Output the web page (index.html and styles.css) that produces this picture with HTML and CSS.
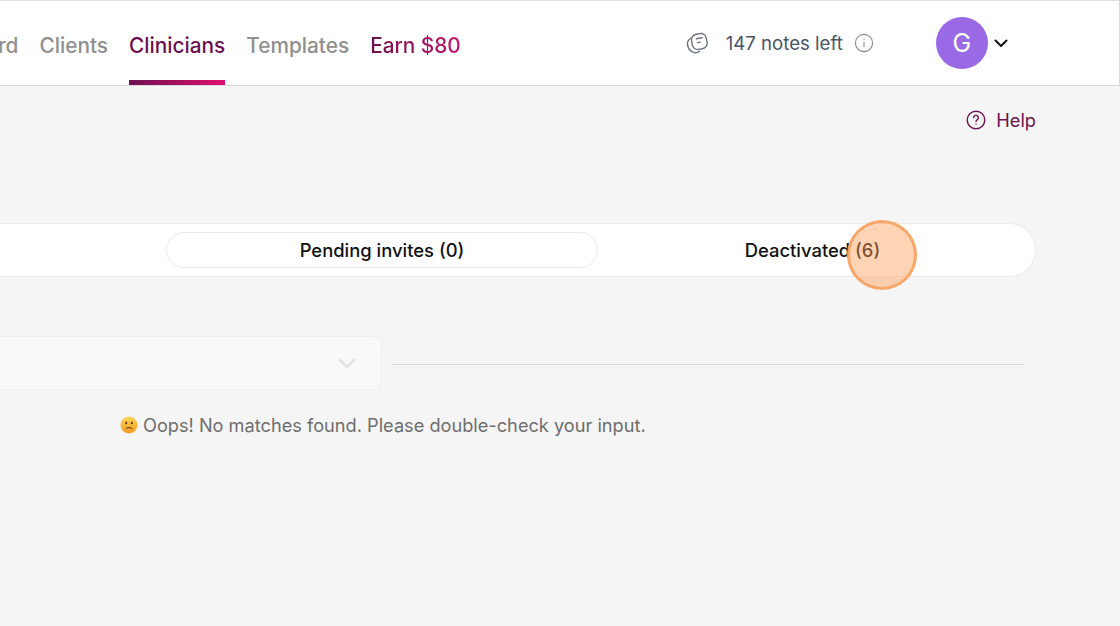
FILE: index.html
```html
<!DOCTYPE html>
<html lang="en">

<head>
  <meta charset="UTF-8">
  <meta name="viewport" content="width=device-width, initial-scale=1.0">
  <title>Clinicians</title>
  <link rel="stylesheet" href="styles.css">
</head>

<body>

  <!-- Top Bar -->
  <header class="topbar">
    <nav class="nav">
      <a class="nav-link">Dashboard</a>
      <a class="nav-link">Clients</a>
      <a class="nav-link active">Clinicians</a>
      <a class="nav-link">Templates</a>
      <a class="nav-link earn">Earn $80</a>
    </nav>

    <div class="notes">
      <svg class="notes-icon" width="24" height="24" viewBox="0 0 24 24" fill="none" stroke="#6b7280" stroke-width="1.4" stroke-linecap="round" stroke-linejoin="round">
        <rect x="6.8" y="2.8" width="15" height="15.4" rx="5.6" transform="rotate(-10 14.3 10.5)"/>
        <path d="M6.2 7C3.6 8.4 2 10.8 2.6 14c.6 3.4 2.8 6.4 6 7.4 2.2.7 4.4.2 5.8-1.2"/>
        <path d="M11.4 7.8l5.6-1M12.4 11.6l2.8-.5"/>
      </svg>
      <span class="notes-text">147 notes left</span>
      <svg width="20" height="20" viewBox="0 0 20 20" fill="none" stroke="#8a8a8a" stroke-width="1.1" stroke-linecap="round">
        <circle cx="10" cy="10" r="8.6"/>
        <path d="M10 9.2v4.6M10 6.2v.3"/>
      </svg>
    </div>

    <div class="account">
      <div class="avatar">G</div>
      <svg class="account-chevron" width="14" height="9" viewBox="0 0 14 9" fill="none" stroke="#111" stroke-width="2" stroke-linecap="round" stroke-linejoin="round">
        <path d="M1.5 1.5L7 7l5.5-5.5"/>
      </svg>
    </div>
  </header>

  <main class="content">
    <!-- Help -->
    <div class="help-row">
      <a class="help">
        <svg width="20" height="20" viewBox="0 0 20 20" fill="none" stroke="#6b1550" stroke-width="1.4" stroke-linecap="round" stroke-linejoin="round">
          <circle cx="10" cy="10" r="8.8"/>
          <path d="M7.6 7.7a2.4 2.4 0 1 1 3.7 2c-.9.6-1.3 1-1.3 1.9"/>
          <path d="M10 14.2v.1"/>
        </svg>
        Help
      </a>
    </div>

    <!-- Tabs -->
    <div class="tabs">
      <div class="tab tab-pending">Pending invites (0)</div>
      <div class="tab tab-deactivated">Deactivated (6)</div>
    </div>

    <!-- Filter -->
    <div class="filter-row">
      <div class="select">
        <svg width="18" height="11" viewBox="0 0 18 11" fill="none" stroke="#e2e2e2" stroke-width="2.6" stroke-linecap="round" stroke-linejoin="round">
          <path d="M2 2l7 7 7-7"/>
        </svg>
      </div>
      <div class="divider"></div>
    </div>

    <p class="empty">
      <svg class="emoji" width="18" height="18" viewBox="0 0 18 18">
        <defs>
          <linearGradient id="face" x1="0" y1="0" x2="0" y2="1">
            <stop offset="0" stop-color="#fbd65a"/>
            <stop offset="1" stop-color="#f39a1f"/>
          </linearGradient>
        </defs>
        <circle cx="9" cy="9" r="8.5" fill="url(#face)"/>
        <ellipse cx="6.2" cy="7" rx="1" ry="1.3" fill="#5a3410"/>
        <ellipse cx="11.8" cy="7" rx="1" ry="1.3" fill="#5a3410"/>
        <path d="M6 12.6c1.6-1.5 4.4-1.5 6 0" fill="none" stroke="#5a3410" stroke-width="1" stroke-linecap="round"/>
      </svg>
      Oops! No matches found. Please double-check your input.
    </p>
  </main>

  <!-- Click marker from the recording -->
  <div class="click-marker"></div>

</body>

</html>
```

FILE: styles.css
```css
/* General Page Styles */
body {
  font-family: 'Inter', 'Liberation Sans', sans-serif;
  background: #f5f5f5;
  margin: 0;
  height: 626px;
  overflow: hidden;
  color: #111;
}

/* Top Bar */
.topbar {
  display: flex;
  align-items: center;
  height: 84px;
  background: #fff;
  border-top: 1px solid #dedede;
  border-bottom: 1px solid #d9d9d9;
  border-right: 1px solid #d9d9d9;
}

.nav {
  display: flex;
  align-self: stretch;
  gap: 21px;
  margin-left: -90px;
}

.nav-link {
  display: flex;
  align-items: center;
  font-size: 20.8px;
  font-weight: 500;
  color: #8f8f8f;
  padding-top: 9px;
  box-sizing: border-box;
  border-bottom: 5px solid transparent;
}

.nav-link.active {
  color: #6b1150;
  border-bottom: 5px solid;
  border-image: linear-gradient(90deg, #6b1150, #e0106f) 1;
}

.nav-link.earn {
  background: linear-gradient(90deg, #6b1150, #c2196f);
  -webkit-background-clip: text;
  background-clip: text;
  color: transparent;
}

/* Notes Counter */
.notes {
  display: flex;
  align-items: center;
  margin-left: 224px;
}

.notes-icon {
  margin-right: 17px;
}

.notes-text {
  font-size: 18.6px;
  color: #475467;
  margin-right: 11px;
}

/* Account */
.account {
  display: flex;
  align-items: center;
  gap: 6px;
  margin-left: 62px;
  margin-top: -1px;
}

.account-chevron {
  margin-top: 1px;
}

.avatar {
  width: 52px;
  height: 52px;
  border-radius: 50%;
  background: #9a6ae6;
  color: #fff;
  font-size: 25px;
  display: flex;
  align-items: center;
  justify-content: center;
}

/* Content */
.content {
  padding-right: 84px;
}

.help-row {
  display: flex;
  justify-content: flex-end;
  padding-top: 23px;
}

.help {
  display: flex;
  align-items: center;
  gap: 10px;
  font-size: 18.2px;
  line-height: 22px;
  color: #6b1550;
}

/* Tabs */
.tabs {
  display: flex;
  align-items: center;
  justify-content: space-between;
  height: 52px;
  margin-top: 92px;
  margin-left: -60px;
  padding: 0 8px 0 225px;
  background: #fff;
  border: 1px solid #ececec;
  border-radius: 27px;
}

.tab {
  font-size: 18.4px;
  font-weight: 500;
  text-align: center;
  line-height: 35px;
  box-sizing: border-box;
}

.tab-pending {
  width: 432px;
  height: 36px;
  border: 1px solid #ececec;
  border-radius: 18px;
}

.tab-deactivated {
  flex: 1;
}

/* Filter */
.filter-row {
  display: flex;
  align-items: center;
  gap: 10px;
  margin-top: 59px;
  margin-left: -60px;
  margin-right: 12px;
}

.select {
  width: 442px;
  height: 54px;
  flex-shrink: 0;
  display: flex;
  align-items: center;
  justify-content: flex-end;
  padding-right: 25px;
  box-sizing: border-box;
  background: #f9f9f9;
  border: 1px solid #f0f0f0;
  border-radius: 10px;
}

.divider {
  flex: 1;
  height: 1px;
  margin-top: 2px;
  background: #d9d9d9;
}

.empty {
  display: flex;
  align-items: center;
  gap: 5px;
  margin: 24px 0 0 120px;
  font-size: 18.2px;
  line-height: 22px;
  color: #6e6e6e;
}

/* Click Marker */
.click-marker {
  position: absolute;
  left: 847px;
  top: 220px;
  width: 70px;
  height: 70px;
  box-sizing: border-box;
  border-radius: 50%;
  background: rgba(253, 160, 90, 0.45);
  border: 3px solid rgba(248, 165, 100, 0.95);
}
```
